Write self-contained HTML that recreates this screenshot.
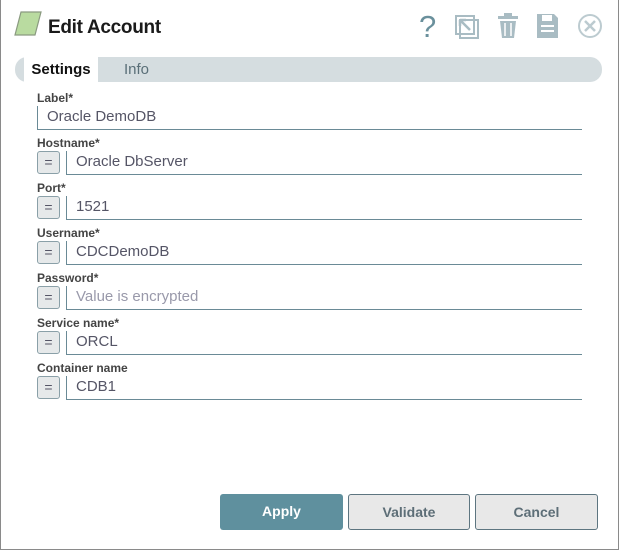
<!DOCTYPE html>
<html><head><meta charset="utf-8"><style>
*{box-sizing:border-box;margin:0;padding:0}
body{width:619px;height:550px;background:#fff;font-family:"Liberation Sans",sans-serif;position:relative;overflow:hidden}
.frame{position:absolute;left:0;top:0;width:619px;height:550px;border:1px solid #8a8a8a;border-top:none}
.title{position:absolute;left:48px;top:17px;font-size:19px;font-weight:bold;color:#1a1a1a;letter-spacing:-0.3px}
.tabs{position:absolute;left:15px;top:57px;width:587px;height:25px;background:#d5dde0;border-radius:12px}
.tab1{position:absolute;left:24px;top:57px;width:74px;height:25px;background:#fff;font-weight:bold;font-size:15px;color:#111;text-align:center;line-height:25px}
.tab2{position:absolute;left:124px;top:57px;font-size:15px;color:#5a6f78;line-height:25px}
.lbl{position:absolute;left:37px;font-size:12px;font-weight:bold;color:#444}
.inp{position:absolute;height:24px;border-left:1px solid #6a8a96;border-bottom:1px solid #6a8a96;font-size:15px;color:#556;padding-left:9px;line-height:22px}
.eq{position:absolute;left:37px;width:23px;height:23px;border:1px solid #8aa0a8;border-radius:3px;background:#e6e9ea;color:#556;font-size:14px;text-align:center;line-height:20px}
.btn{position:absolute;top:494px;height:36px;border-radius:3px;font-size:14px;font-weight:bold;text-align:center;line-height:34px}
</style></head><body>
<div class="frame"></div>
<svg style="position:absolute;left:13px;top:11px" width="30" height="26"><polygon points="8,1 28,1 22,24 2,24" fill="#b9dba0" stroke="#8a9a80" stroke-width="1.2"/></svg>
<div class="title">Edit Account</div>
<svg style="position:absolute;left:415px;top:8px" width="200" height="36">
<text x="4" y="29" font-family="Liberation Sans" font-size="31" fill="#6a909c">?</text>
<g fill="none" stroke="#a9bcc3" stroke-width="2"><rect x="41" y="8" width="18" height="18"/><rect x="45" y="12" width="18" height="18"/></g>
<path d="M45 12 L55 22 M45 12 h6 M45 12 v6" stroke="#a9bcc3" stroke-width="2.5"/>
<g fill="#a9bcc3"><rect x="83" y="8" width="20" height="3"/><rect x="89" y="5" width="8" height="3"/><path d="M85 13 h16 l-2 17 h-12 z"/></g>
<g stroke="#fff" stroke-width="1.5"><line x1="90" y1="15" x2="90" y2="28"/><line x1="96" y1="15" x2="96" y2="28"/></g>
<path d="M122 6 h17 l4 4 v20 h-21 z" fill="#a9bcc3"/><rect x="127" y="7" width="10" height="6" fill="#fff"/><rect x="126" y="17" width="13" height="2" fill="#fff"/><rect x="126" y="22" width="13" height="2" fill="#fff"/>
<circle cx="175" cy="18" r="11" fill="none" stroke="#bccbd0" stroke-width="2"/><path d="M170 13 l10 10 M180 13 l-10 10" stroke="#bccbd0" stroke-width="2.5"/>
</svg>
<div class="tabs"></div><div class="tab1">Settings</div><div class="tab2">Info</div>

<div class="lbl" style="top:91px">Label*</div>
<div class="inp" style="left:37px;top:106px;width:545px">Oracle DemoDB</div>

<div class="lbl" style="top:136px">Hostname*</div>
<div class="eq" style="top:151px">=</div>
<div class="inp" style="left:66px;top:151px;width:516px">Oracle DbServer</div>

<div class="lbl" style="top:181px">Port*</div>
<div class="eq" style="top:196px">=</div>
<div class="inp" style="left:66px;top:196px;width:516px">1521</div>

<div class="lbl" style="top:226px">Username*</div>
<div class="eq" style="top:241px">=</div>
<div class="inp" style="left:66px;top:241px;width:516px">CDCDemoDB</div>

<div class="lbl" style="top:271px">Password*</div>
<div class="eq" style="top:286px">=</div>
<div class="inp" style="left:66px;top:286px;width:516px;color:#99a">Value is encrypted</div>

<div class="lbl" style="top:316px">Service name*</div>
<div class="eq" style="top:331px">=</div>
<div class="inp" style="left:66px;top:331px;width:516px">ORCL</div>

<div class="lbl" style="top:361px">Container name</div>
<div class="eq" style="top:376px">=</div>
<div class="inp" style="left:66px;top:376px;width:516px">CDB1</div>

<div class="btn" style="left:220px;width:123px;background:#5f909e;color:#fff">Apply</div>
<div class="btn" style="left:348px;width:122px;background:#e8e8e8;border:1px solid #5d7580;color:#5d6e77">Validate</div>
<div class="btn" style="left:475px;width:123px;background:#e8e8e8;border:1px solid #5d7580;color:#5d6e77">Cancel</div>
</body></html>
